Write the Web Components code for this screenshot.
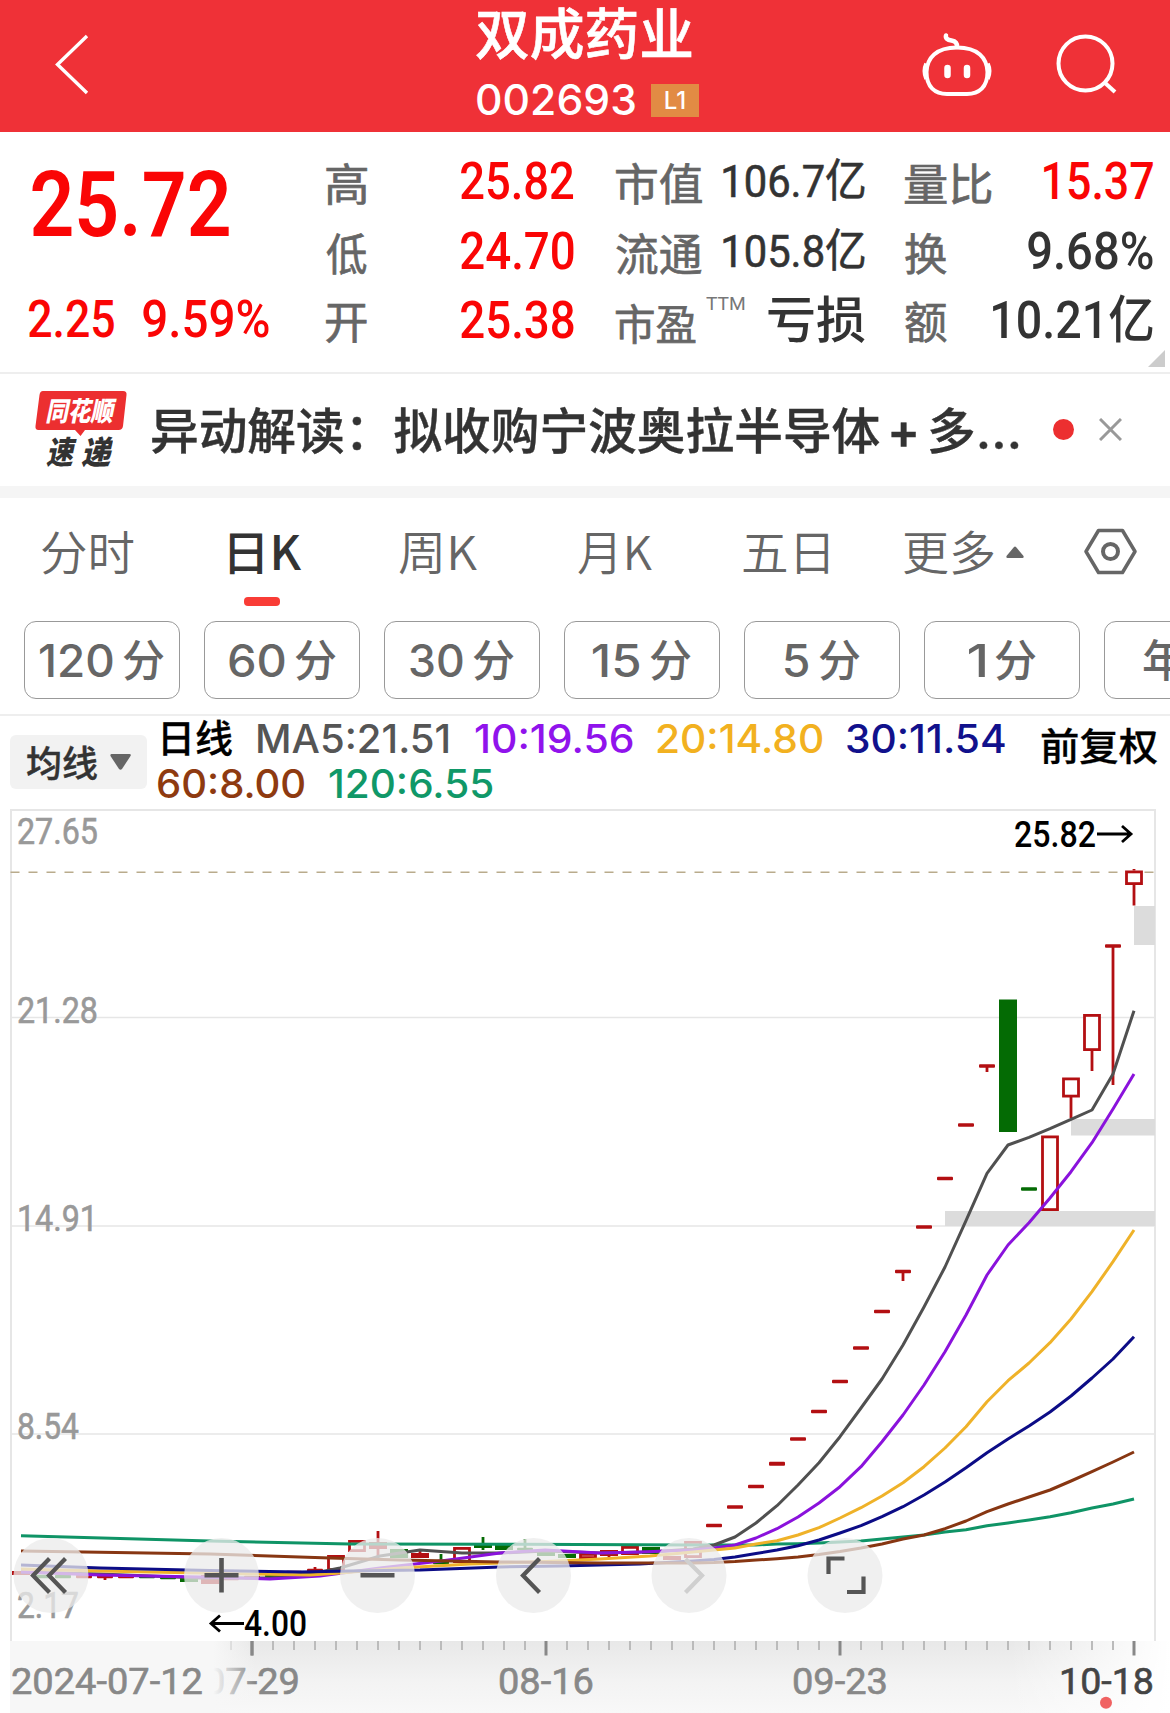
<!DOCTYPE html>
<html lang="zh-CN">
<head>
<meta charset="utf-8">
<title>双成药业 002693</title>
<style>
body{
    margin: 0;
    width: 1170px;
    height: 1713px;
    overflow: hidden;
    background-color: #fff;
    font-family: Inter, "Noto Sans CJK SC", sans-serif;
}
</style>
</head>
<body>
<stock-page></stock-page>

<script>
// One line of text, stretched so that its ink is exactly `w` pixels wide
class FitText extends HTMLElement{
    constructor(){
        super()
        this._shadowDom = this.attachShadow({mode: 'open'})
    }
    connectedCallback(){
        const w = parseFloat(this.getAttribute('w'))
        this._shadowDom.innerHTML = `
        <style>
        :host{
            display: block;
            flex: none;
            width: ${w}px;
            white-space: nowrap;
        }
        span{
            display: inline-block;
            transform-origin: 0 50%;
        }
        </style>
        <span><slot></slot></span>
        `
        const css = getComputedStyle(this)
        const ctx = document.createElement('canvas').getContext('2d')
        ctx.font = `${css.fontStyle} ${css.fontWeight} ${css.fontSize} ${css.fontFamily}`
        const m = ctx.measureText(this.textContent.trim())
        const ink = m.actualBoundingBoxLeft + m.actualBoundingBoxRight
        const scale = w / ink
        this._shadowDom.querySelector('span').style.transform =
            `translateX(${m.actualBoundingBoxLeft * scale}px) scaleX(${scale})`
    }
}

class StockHeader extends HTMLElement{
    constructor(){
        super()
        this._shadowDom = this.attachShadow({mode: 'open'})
    }
    connectedCallback(){
        this._shadowDom.innerHTML = `
        <style>
        :host{
            display: flex;
            height: 132px;
            background-color: #ef3137;
            color: #fff;
        }
        svg{
            fill: none;
            stroke: #fff;
            flex: none;
        }
        .title{
            width: 440px;
            margin-left: 376px;
        }
        .name{
            font: 500 55px/68px Inter, "Noto Sans CJK SC", sans-serif;
            -webkit-text-stroke: .6px #fff;
        }
        .code{
            display: flex;
            align-items: center;
            gap: 16px;
            margin-top: 14px;
            padding-left: 1px;
            height: 36px;
            font: 500 43px/34px Inter, sans-serif;
        }
        .code fit-text{ height: 36px; }
        .level{
            display: flex;
            justify-content: center;
            width: 48px;
            height: 33px;
            background-color: #e28b44;
            font: 500 24px/33px Inter, sans-serif;
        }
        </style>
        <svg width="100" height="132" stroke-width="3.4"><path d="M87 36L57.500 64.500L87 93"/></svg>
        <div class="title">
            <fit-text class="name" w="216"><slot name="name"></slot></fit-text>
            <div class="code">
                <fit-text w="158"><slot name="code"></slot></fit-text>
                <span class="level"><slot name="level"></slot></span>
            </div>
        </div>
        <svg width="253" height="132" viewBox="916 0 253 132" stroke-width="4">
            <path d="M957 47.500C936 47.500 927 58 926.500 72C926.500 87 935 94 947 94H967C979 94 987.500 87 987.500 72C987 58 978 47.500 957 47.500Z"/>
            <path d="M926 63.500Q922.500 71 926 79M988 63.500Q991.500 71 988 79" stroke-width="3.500"/>
            <path d="M957 47Q957.500 41.500 951.500 40.500Q945 39.500 946 35.500" stroke-linecap="round" stroke-width="4.500"/>
            <path d="M947.500 68V75M967 68V75" stroke-linecap="round" stroke-width="6.500"/>
            <ellipse cx="1085.500" cy="63.500" rx="27" ry="27"/>
            <path d="M1104 82L1115 92"/>
        </svg>
        `
        this.querySelectorAll('[slot]').forEach(el => {
            const fit = this._shadowDom.querySelector(`slot[name=${el.slot}]`).closest('fit-text')
            // fit-text measures its own text, so it needs the node itself
            if (fit) fit.replaceChildren(el.textContent)
        })
        this._shadowDom.querySelectorAll('fit-text').forEach(el => el.connectedCallback())
    }
}

class QuotePanel extends HTMLElement{
    constructor(){
        super()
        this._shadowDom = this.attachShadow({mode: 'open'})
    }
    connectedCallback(){
        this._shadowDom.innerHTML = `
        <style>
        :host{
            position: relative;
            box-sizing: border-box;
            display: grid;
            grid-template-columns: 326px 248px 42px 249px 40px 248px;
            height: 242px;
            padding-top: 15px;
            border-bottom: 2px solid #eee;
            color: #333;
            font: 500 51px/70px Roboto, "Noto Sans CJK SC", sans-serif;
        }
        .col{
            display: grid;
            grid-template-rows: repeat(3, 70px);
        }
        .c3{ grid-column: 4; }
        .c4{ grid-column: 6; }
        .row{
            display: flex;
            justify-content: space-between;
        }
        .label{
            color: #666;
            font: 400 44.500px/70px "Noto Sans CJK SC", sans-serif;
            -webkit-text-stroke: .7px #666;
        }
        .row:last-child .label{ line-height: 65px; }
        .val{ line-height: 69px; }
        .row:last-child .val{ line-height: 67px; }
        .red{ color: #fa0505; }
        .now{
            padding: 7px 0 0 32px;
            font: 600 91px/102px Roboto, sans-serif;
        }
        .change{
            display: flex;
            gap: 29px;
            padding: 28px 0 0 29px;
            line-height: 71px;
        }
        .cap{
            font-size: 45px;
            font-weight: 400;
            -webkit-text-stroke: .6px #333;
        }
        .ttm{
            color: #777;
            margin: -16px 13px 0 0;
            font: 400 18px/66px Roboto, sans-serif;
        }
        .loss{
            font: 500 50px/59px "Noto Sans CJK SC", sans-serif;
        }
        .row:last-child .pe{
            font-size: 42px;
            line-height: 70px;
        }
        .corner{
            position: absolute;
            right: 5px;
            bottom: 5px;
            width: 17px;
            height: 17px;
            background-color: #ccc;
            clip-path: polygon(100% 0, 100% 100%, 0 100%);
        }
        </style>
        <div class="red">
            <fit-text class="now" w="197">25.72</fit-text>
            <div class="change"><fit-text w="85">2.25</fit-text><fit-text w="126">9.59%</fit-text></div>
        </div>
        <div class="col">
            <div class="row"><fit-text class="label" w="41">高</fit-text><fit-text class="val red" w="113">25.82</fit-text></div>
            <div class="row"><fit-text class="label" w="41">低</fit-text><fit-text class="val red" w="113">24.70</fit-text></div>
            <div class="row"><fit-text class="label" w="41">开</fit-text><fit-text class="val red" w="113">25.38</fit-text></div>
        </div>
        <div class="col c3">
            <div class="row"><fit-text class="label" w="86">市值</fit-text><fit-text class="val cap" w="142">106.7亿</fit-text></div>
            <div class="row"><fit-text class="label" w="86">流通</fit-text><fit-text class="val cap" w="142">105.8亿</fit-text></div>
            <div class="row"><fit-text class="label pe" w="80">市盈</fit-text><fit-text class="ttm" w="39">TTM</fit-text><fit-text class="loss" w="97">亏损</fit-text></div>
        </div>
        <div class="col c4">
            <div class="row"><fit-text class="label" w="86">量比</fit-text><fit-text class="val red" w="109">15.37</fit-text></div>
            <div class="row"><fit-text class="label" w="42">换</fit-text><fit-text class="val" w="125">9.68%</fit-text></div>
            <div class="row"><fit-text class="label" w="42">额</fit-text><fit-text class="val" w="160">10.21亿</fit-text></div>
        </div>
        <i class="corner"></i>
        `
    }
}

class NewsBar extends HTMLElement{
    constructor(){
        super()
        this._shadowDom = this.attachShadow({mode: 'open'})
    }
    connectedCallback(){
        this._shadowDom.innerHTML = `
        <style>
        :host{
            display: flex;
            align-items: center;
            box-sizing: border-box;
            height: 124px;
            padding: 0 0 2px 35px;
            border-bottom: 12px solid #f5f5f5;
        }
        .logo{
            width: 92px;
            height: 76px;
            margin-right: 23px;
            font: italic 900 27px/37px "Noto Sans CJK SC", sans-serif;
        }
        .brand{
            position: relative;
            height: 39px;
            padding-left: 11px;
            color: #fff;
        }
        .brand svg{
            position: absolute;
            left: 0;
            top: 0;
            z-index: -1;
        }
        .sub{
            display: flex;
            gap: 4px;
            padding-left: 11px;
            margin-top: 4px;
            color: #333;
            font-size: 32px;
            line-height: 32px;
        }
        .headline{
            width: 870px;
            padding-top: 5px;
            white-space: nowrap;
            color: #333;
            font: 500 48.700px/60px Inter, "Noto Sans CJK SC", sans-serif;
            -webkit-text-stroke: .4px #333;
        }
        .plus{
            margin: 0 7px;
            font-weight: 600;
        }
        .more{ letter-spacing: 1px; font-size: 51px; line-height: 1; }
        .dot{
            width: 21px;
            height: 21px;
            margin: 0 25px 0 33px;
            border-radius: 50%;
            background-color: #ec2f30;
        }
        </style>
        <div class="logo">
            <div class="brand">
                <svg width="92" height="46"><path d="M8 0H88Q92 0 91.500 4L88 35Q87.500 39 83.500 39H50L45.500 45L40 39H3.500Q0 39 .5 35L4.500 4Q5 0 8 0Z" fill="#ec2f30"/></svg>
                <fit-text w="71">同花顺</fit-text>
            </div>
            <div class="sub"><fit-text w="31">速</fit-text><fit-text w="32">递</fit-text></div>
        </div>
        <div class="headline">异动解读：拟收购宁波奥拉半导体<span class="plus">+</span>多<span class="more">…</span></div>
        <i class="dot"></i>
        <svg width="23" height="23"><path d="M1 1L22 22M22 1L1 22" stroke="#999" stroke-width="3"/></svg>
        `
    }
}

class PeriodTabs extends HTMLElement{
    constructor(){
        super()
        this._shadowDom = this.attachShadow({mode: 'open'})
    }
    connectedCallback(){
        this._shadowDom.innerHTML = `
        <style>
        :host{
            display: flex;
            height: 123px;
            padding-left: 42px;
            color: #666;
            font: 350 47px/104px "Noto Sans CJK SC", sans-serif;
        }
        .tab{
            display: flex;
            flex-direction: column;
            align-items: center;
        }
        .active{
            color: #333;
            font-weight: 500;
        }
        .active::after{
            content: "";
            width: 36px;
            height: 9px;
            margin-top: -5px;
            margin-right: 7px;
            border-radius: 4px;
            background-color: #f93c36;
        }
        .up{
            margin: 48px 0 0 12px;
        }
        .gear{
            margin: 29px 0 0 60px;
        }
        </style>
        <fit-text w="92">分时</fit-text>
        <div class="tab active" style="margin-left: 95px"><fit-text w="73">日K</fit-text></div>
        <fit-text style="margin-left: 97px" w="78">周K</fit-text>
        <fit-text style="margin-left: 101px" w="74">月K</fit-text>
        <fit-text style="margin-left: 91px" w="85">五日</fit-text>
        <fit-text style="margin-left: 76px" w="90">更多</fit-text>
        <svg class="up" width="18" height="12"><path d="M8 1Q9 0 10 1L17.500 10Q18 12 16.500 12H1.500Q0 12 .5 10Z" fill="#666"/></svg>
        <svg class="gear" width="53" height="48" fill="none" stroke="#666" stroke-width="3.500"><path d="M14.500 3.500H38.500L51 24.500L38.500 45.500H14.500L2 24.500Z" stroke-linejoin="round"/><circle cx="26.500" cy="24.500" r="7.500" stroke-width="4"/></svg>
        `
    }
}

class MinutePills extends HTMLElement{
    constructor(){
        super()
        this._shadowDom = this.attachShadow({mode: 'open'})
    }
    connectedCallback(){
        const pills = [['120', 73], ['60', 56], ['30', 53], ['15', 47], ['5', 24], ['1', 16]]
        this._shadowDom.innerHTML = `
        <style>
        :host{
            display: flex;
            gap: 24px;
            height: 93px;
            padding-left: 24px;
            border-bottom: 2px solid #eee;
            overflow: hidden;
            color: #666;
        }
        .pill{
            flex: none;
            box-sizing: border-box;
            display: flex;
            justify-content: center;
            gap: 10px;
            width: 156px;
            height: 78px;
            border: 1.500px solid #999;
            border-radius: 12px;
            font: 500 44.500px/78px Inter, sans-serif;
        }
        .unit{ font: 500 44px/73px "Noto Sans CJK SC", sans-serif; }
        .last{
            justify-content: flex-start;
            padding-left: 38px;
        }
        </style>
        ${pills.map(([n, w]) => `<div class="pill"><fit-text w="${w}">${n}</fit-text><fit-text class="unit" w="41">分</fit-text></div>`).join('')}
        <div class="pill last"><fit-text class="unit" w="42">年</fit-text></div>
        `
    }
}

class MaLegend extends HTMLElement{
    constructor(){
        super()
        this._shadowDom = this.attachShadow({mode: 'open'})
    }
    connectedCallback(){
        this._shadowDom.innerHTML = `
        <style>
        :host{
            display: flex;
            height: 93px;
            padding-left: 10px;
            font: 500 39px/45px Inter, sans-serif;
        }
        .select{
            display: flex;
            align-items: center;
            box-sizing: border-box;
            width: 137px;
            height: 54px;
            margin: 19px 11px 0 0;
            padding-left: 17px;
            gap: 13px;
            border-radius: 6px;
            background-color: #f2f2f2;
            color: #333;
            font: 500 36px/49px "Noto Sans CJK SC", sans-serif;
        }
        .select fit-text{
            height: 51px;
            -webkit-text-stroke: .4px #333;
        }
        .lines{ width: 847px; }
        .line{
            display: flex;
            height: 45px;
        }
        .cjk{
            color: #000;
            font: 500 38px/40px "Noto Sans CJK SC", sans-serif;
            -webkit-text-stroke: .3px #000;
        }
        .adjust{ margin: 8px 0 0 36px; }
        </style>
        <div class="select"><fit-text w="70">均线</fit-text><svg width="21" height="16"><path d="M1.500 0H19.500Q21.500 0 20.500 2L12 15Q10.500 16.500 9 15L.5 2Q0 0 1.500 0Z" fill="#666"/></svg></div>
        <div class="lines">
            <div class="line">
                <fit-text class="cjk" style="margin-left: 5px" w="69">日线</fit-text>
                <fit-text style="color: #555; margin-left: 26px" w="191">MA5:21.51</fit-text>
                <fit-text style="color: #9013ec; margin-left: 26px" w="158">10:19.56</fit-text>
                <fit-text style="color: #f2b120; margin-left: 24px" w="166">20:14.80</fit-text>
                <fit-text style="color: #11118c; margin-left: 24px" w="158">30:11.54</fit-text>
            </div>
            <div class="line">
                <fit-text style="color: #8e3a10" w="147">60:8.00</fit-text>
                <fit-text style="color: #109868; margin-left: 24px" w="163">120:6.55</fit-text>
            </div>
        </div>
        <fit-text class="cjk adjust" w="116">前复权</fit-text>
        `
    }
}

const RED = '#b30f12'
const GREEN = '#046b04'

// Candles, one every 21px: [kind, body top, body bottom, wick top, wick bottom]
// r/g: filled, h: hollow
const candles = [
    ['r', 1571, 1575], ['g', 1575, 1578], ['g', 1575, 1578], ['r', 1575, 1578], ['r', 1575, 1578, 1574, 1580], ['r', 1575, 1578],
    ['g', 1576, 1578], ['g', 1576, 1579], ['g', 1576, 1582], ['r', 1575, 1584], ['r', 1577, 1580], ['r', 1576, 1579],
    ['g', 1575, 1577], ['r', 1571, 1573], ['r', 1569, 1572, 1567, 1572], ['h', 1555, 1571], ['h', 1540, 1552], ['r', 1542, 1549, 1531, 1556],
    ['g', 1549, 1558], ['r', 1553, 1558, 1549, 1558], ['g', 1561, 1564, 1554, 1564], ['h', 1547, 1563], ['g', 1543, 1548, 1537, 1550], ['g', 1545, 1550],
    ['g', 1548, 1550, 1539, 1550], ['g', 1551, 1556], ['g', 1554, 1558], ['h', 1553, 1559], ['r', 1550, 1556, 1550, 1558], ['h', 1546, 1555],
    ['g', 1547, 1554], ['r', 1556, 1560], ['h', 1541, 1558],
    ['r', 1524, 1527], ['r', 1505.5, 1508.5], ['r', 1485, 1488], ['r', 1462, 1465.5], ['r', 1437.5, 1440.5], ['r', 1410, 1413],
    ['r', 1380, 1383], ['r', 1346.5, 1349.5], ['r', 1310, 1313], ['r', 1270, 1273, 1270, 1281], ['r', 1225.5, 1228.5], ['r', 1177, 1180],
    ['r', 1123.5, 1126.5], ['r', 1064.5, 1067.5, 1065, 1072], ['g', 999.5, 1132], ['g', 1187.5, 1190.5], ['h', 1135.5, 1211],
    ['h', 1077.5, 1097.5, 1097, 1118], ['h', 1014, 1051, 1050, 1071], ['r', 944.500, 947.5, 946, 1085], ['h', 870.5, 885, 869, 905.5]
]

// Moving averages: a flat, hand-placed lead-in, then one point per day from x=714
const averages = [
    {color: '#0f9466', lead: [[21, 1535.7], [210, 1541], [350, 1544], [520, 1544.3], [693, 1545]],
     rise: [1545, 1545, 1545, 1544, 1543.7, 1543, 1542, 1541, 1539, 1537, 1535, 1532, 1529.7, 1525.7, 1523, 1520, 1516.7, 1512.7, 1508, 1504, 1499]},
    {color: '#505050', lead: [[21, 1572], [100, 1574], [200, 1578], [270, 1578], [315, 1573], [340, 1568], [380, 1556], [420, 1550], [462, 1553], [500, 1553], [546, 1551], [600, 1553], [650, 1552], [693, 1549]],
     rise: [1545, 1537, 1523, 1505.7, 1485, 1462.7, 1436.7, 1408, 1379, 1345, 1307, 1267, 1220.7, 1173.3, 1145, 1137.3, 1128.7, 1119.3, 1110, 1074, 1010.7]},
    {color: '#8a12dc', lead: [[21, 1572], [100, 1575], [200, 1577], [270, 1579], [320, 1576], [380, 1568], [441, 1561], [500, 1553], [545, 1550], [600, 1553], [640, 1552], [693, 1550]],
     rise: [1548, 1545, 1538, 1528.7, 1517, 1503, 1486.7, 1466.7, 1441.7, 1415, 1385, 1351.7, 1315, 1275, 1245, 1222.7, 1198, 1171.7, 1142.7, 1109, 1074]},
    {color: '#efb229', lead: [[21, 1569], [100, 1571], [250, 1574], [310, 1575], [340, 1573], [400, 1568], [470, 1564], [546, 1561.5], [600, 1559], [650, 1556], [693, 1552]],
     rise: [1550, 1548, 1544, 1540.7, 1535, 1527.7, 1518, 1507.7, 1496, 1482.7, 1466.7, 1448, 1426.7, 1401.7, 1380.7, 1363, 1342.7, 1319, 1291.7, 1261.7, 1230]},
    {color: '#0c0c86', lead: [[21, 1565], [100, 1568], [210, 1570.5], [300, 1572], [350, 1571], [420, 1570], [500, 1567], [560, 1566], [640, 1564], [693, 1561]],
     rise: [1559.5, 1557, 1553.5, 1550, 1545.7, 1540, 1533, 1525.7, 1516.7, 1506.7, 1495, 1482, 1467.7, 1452.7, 1439, 1426, 1412, 1396, 1378, 1359, 1336.7]},
    {color: '#873612', lead: [[21, 1551], [210, 1554], [330, 1558], [400, 1560], [500, 1562], [600, 1563], [693, 1563]],
     rise: [1562.5, 1561.5, 1560, 1558.7, 1557, 1554.5, 1551.5, 1548, 1544, 1539, 1535, 1528.7, 1521, 1511.7, 1504, 1497, 1490, 1481, 1471.7, 1462, 1452]}
]

function candle([kind, top, bottom, high, low], i){
    const x = 21 + 21 * i
    const color = kind === 'g' ? GREEN : RED
    const thin = bottom - top < 4
    const wick = high ? `<path d="M${x} ${high}V${kind === 'h' && high < top ? top : low}" stroke="${color}" stroke-width="2.8"/>` : ''
    const tail = kind === 'h' && high < top ? `<path d="M${x} ${bottom}V${low}" stroke="${color}" stroke-width="2.8"/>` : ''
    const w = thin ? 16 : 18
    const grow = thin ? .3 : 0
    const body = kind === 'h'
        ? `<rect x="${x - 7.5}" y="${top + 1.4}" width="15" height="${bottom - top - 2.8}" fill="#fff" stroke="${color}" stroke-width="2.8"/>`
        : `<rect x="${x - w / 2}" y="${top - grow}" width="${w}" height="${bottom - top + 2 * grow}" rx="${thin ? 1 : 0}" fill="${color}"/>`
    return wick + tail + body
}

function average({color, lead, rise}){
    const points = lead.concat(rise.map((y, i) => [714 + 21 * i, y]))
    return `<polyline points="${points.join(' ')}" stroke="${color}"/>`
}

class KlineChart extends HTMLElement{
    constructor(){
        super()
        this._shadowDom = this.attachShadow({mode: 'open'})
    }
    connectedCallback(){
        let ticks = ''
        for (let x = 231; x <= 1134; x += 21){
            const major = (x - 252) % 294 === 0
            ticks += `<path d="M${x} 1641V${major ? 1655.5 : 1650}" stroke="${major ? '#888' : '#bbb'}" stroke-width="${major ? 3 : 2}"/>`
        }
        this._shadowDom.innerHTML = `
        <style>
        :host{
            position: relative;
            display: block;
            height: 904px;
        }
        svg{ display: block; }
        text{
            font: 400 36.500px Roboto, sans-serif;
        }
        .price{ fill: #999; stroke: #999; stroke-width: .6; }
        .mark{ fill: #000; font-weight: 500; }
        .arrow{ fill: none; stroke: #000; stroke-width: 2.800; }
        .date{ fill: #888; stroke: #888; stroke-width: .6; }
        .tools{
            position: absolute;
            top: 729px;
            left: 0;
        }
        </style>
        <svg width="1170" height="904" viewBox="0 809 1170 904">
            <defs>
                <linearGradient id="strip" x2="0" y2="1"><stop offset="0" stop-color="#e8e8e8"/><stop offset=".55" stop-color="#f3f3f3"/><stop offset="1" stop-color="#f8f8f8"/></linearGradient>
                <linearGradient id="cover"><stop offset="0" stop-color="#f7f7f7"/><stop offset=".83" stop-color="#f7f7f7"/><stop offset="1" stop-color="#f7f7f7" stop-opacity="0"/></linearGradient>
                <linearGradient id="edge"><stop offset="0" stop-color="#fff" stop-opacity="0"/><stop offset="1" stop-color="#fff"/></linearGradient>
            </defs>
            <g fill="none" stroke="#e6e6e6" stroke-width="2">
                <path d="M11 1641V810H1155V1641"/>
                <path d="M11 1017.500H1155M11 1226H1155M11 1434H1155" stroke-width="1.500"/>
            </g>
            <g fill="#dcdcdc">
                <rect x="1134" y="906" width="21" height="39"/>
                <rect x="1071" y="1119" width="84" height="16.500"/>
                <rect x="945" y="1211" width="210" height="15"/>
            </g>
            <g class="price">
                <text x="17" y="844" textLength="81" lengthAdjust="spacingAndGlyphs">27.65</text>
                <text x="17" y="1022.500" textLength="81" lengthAdjust="spacingAndGlyphs">21.28</text>
                <text x="17" y="1231" textLength="81" lengthAdjust="spacingAndGlyphs">14.91</text>
                <text x="17" y="1439" textLength="62" lengthAdjust="spacingAndGlyphs">8.54</text>
                <text x="17" y="1618" textLength="62" lengthAdjust="spacingAndGlyphs">2.17</text>
            </g>
            <path d="M10.500 872.300H1154" stroke="#b9ab8c" stroke-width="1.500" stroke-dasharray="9 9"/>
            ${candles.map(candle).join('')}
            <g fill="none" stroke-width="3" stroke-linejoin="round">${averages.map(average).join('')}</g>
            <text class="mark" x="1014" y="847" textLength="82" lengthAdjust="spacingAndGlyphs">25.82</text>
            <path class="arrow" d="M1097 834H1131M1122 826L1131 834L1122 842"/>
            <text class="mark" x="244" y="1636" textLength="63" lengthAdjust="spacingAndGlyphs">4.00</text>
            <path class="arrow" d="M244 1623.500H211M220 1615.500L211 1623.500L220 1631.500"/>

            <rect x="10" y="1641" width="1160" height="72" fill="url(#strip)"/>
            <rect x="1010" y="1641" width="160" height="72" fill="url(#edge)"/>
            ${ticks}
            <g class="date">
                <text x="204" y="1694" textLength="96" lengthAdjust="spacingAndGlyphs">07-29</text>
                <rect x="10" y="1641" width="245" height="72" fill="url(#cover)" stroke="none"/>
                <text x="11" y="1694" textLength="192" lengthAdjust="spacingAndGlyphs">2024-07-12</text>
                <text x="498" y="1694" textLength="96" lengthAdjust="spacingAndGlyphs">08-16</text>
                <text x="792" y="1694" textLength="96" lengthAdjust="spacingAndGlyphs">09-23</text>
                <text x="1059" y="1694" textLength="95" lengthAdjust="spacingAndGlyphs" style="fill: #444; stroke: #444">10-18</text>
            </g>
            <path d="M252 1641V1655.500" stroke="#888" stroke-width="3"/>
            <circle cx="1106" cy="1702.700" r="6" fill="#f06262"/>
        </svg>
        <svg class="tools" width="900" height="76" viewBox="0 1538 900 76" fill="none" stroke="#555" stroke-width="4.200">
            <g fill="#ebebeb" fill-opacity=".76" stroke="none">
                ${[51, 221.5, 377.5, 533.5, 689, 845].map(x => `<circle cx="${x}" cy="1575.500" r="37.500"/>`).join('')}
            </g>
            <path d="M49.500 1558.500L33 1575.500L49.500 1592.500M65.500 1558.500L49 1575.500L65.500 1592.500"/>
            <path d="M221.500 1558V1592.500M204.500 1575.300H238.500M360.500 1575.300H394.500" stroke-width="4.600"/>
            <path d="M539.500 1558.500L523 1575.500L539.500 1592.500"/>
            <path d="M685.500 1559L702 1575.500L685.500 1592.500" stroke="#cfcfcf"/>
            <path d="M844.500 1558.500H828.500V1574M847 1592H863.500V1576.500"/>
        </svg>
        `
    }
}

class StockPage extends HTMLElement{
    constructor(){
        super()
        this._shadowDom = this.attachShadow({mode: 'open'})
    }
    connectedCallback(){
        this._shadowDom.innerHTML = `
        <style>
        :host{
            display: flex;
            flex-direction: column;
            isolation: isolate;
        }
        </style>
        <stock-header>
            <span slot="name">双成药业</span>
            <span slot="code">002693</span>
            <span slot="level">L1</span>
        </stock-header>
        <quote-panel></quote-panel>
        <news-bar></news-bar>
        <period-tabs></period-tabs>
        <minute-pills></minute-pills>
        <ma-legend></ma-legend>
        <kline-chart></kline-chart>
        `
    }
}

window.customElements.define('fit-text', FitText)
window.customElements.define('stock-header', StockHeader)
window.customElements.define('quote-panel', QuotePanel)
window.customElements.define('news-bar', NewsBar)
window.customElements.define('period-tabs', PeriodTabs)
window.customElements.define('minute-pills', MinutePills)
window.customElements.define('ma-legend', MaLegend)
window.customElements.define('kline-chart', KlineChart)
window.customElements.define('stock-page', StockPage)
</script>
</body>
</html>
